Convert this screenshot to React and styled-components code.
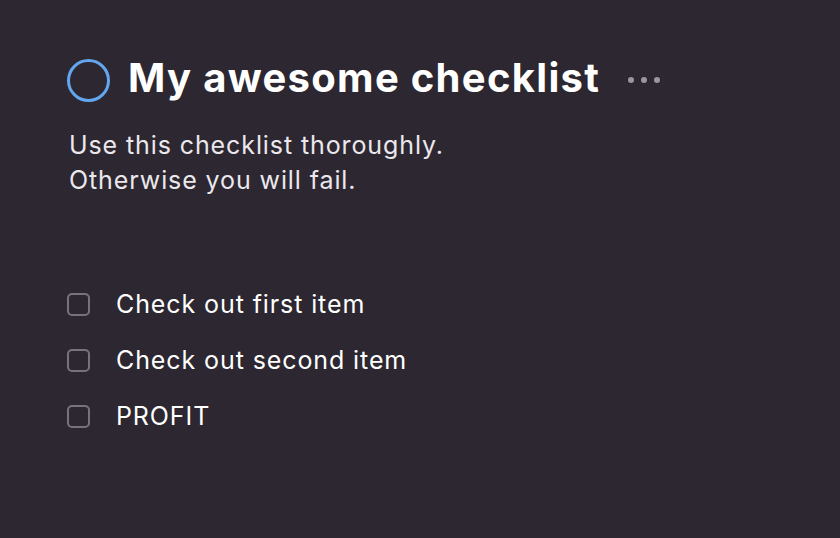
import React from "react";
import styled, { createGlobalStyle } from "styled-components";

const GlobalStyle = createGlobalStyle`
  html, body {
    margin: 0;
    padding: 0;
    background: #2c2730;
  }
  body {
    font-family: Inter, "Noto Sans", "Liberation Sans", sans-serif;
    -webkit-font-smoothing: antialiased;
  }
`;

const Page = styled.div`
  width: 840px;
  height: 538px;
  background: #2c2730;
  box-sizing: border-box;
  padding: 56px 0 0 67px;
  display: flex;
  flex-direction: column;
`;

const TitleRow = styled.div`
  display: flex;
  align-items: center;
  height: 48px;
`;

const Ring = styled.span`
  width: 43px;
  height: 43px;
  border-radius: 50%;
  border: 3.5px solid #64a5f0;
  box-sizing: border-box;
  flex: none;
  margin-right: 18px;
`;

const Title = styled.h1`
  margin: -6px 0 0 0;
  font-size: 40px;
  font-weight: 700;
  color: #ffffff;
  letter-spacing: 1.3px;
`;

const More = styled.button`
  background: none;
  border: 0;
  padding: 0;
  margin-left: 28px;
  display: flex;
  gap: 7px;
  cursor: pointer;
`;

const Dot = styled.span`
  width: 6px;
  height: 6px;
  border-radius: 50%;
  background: #9a96a0;
`;

const Notes = styled.p`
  margin: 24px 0 0 2px;
  font-size: 25px;
  line-height: 35px;
  letter-spacing: 0.9px;
  color: #ebe8ed;
`;

const List = styled.ul`
  list-style: none;
  margin: 88px 0 0 0;
  padding: 0;
  display: flex;
  flex-direction: column;
  gap: 20px;
`;

const Item = styled.li`
  display: flex;
  align-items: center;
  gap: 26px;
  height: 36px;
`;

const Box = styled.span`
  width: 23px;
  height: 23px;
  box-sizing: border-box;
  border: 2px solid #77727c;
  border-radius: 5px;
  flex: none;
`;

const Label = styled.span`
  font-size: 25px;
  letter-spacing: 0.9px;
  color: #ffffff;
`;

const items = ["Check out first item", "Check out second item", "PROFIT"];

export default function App() {
  return (
    <Page>
      <GlobalStyle />
      <TitleRow>
        <Ring />
        <Title>My awesome checklist</Title>
        <More aria-label="More">
          <Dot />
          <Dot />
          <Dot />
        </More>
      </TitleRow>
      <Notes>
        Use this checklist thoroughly.
        <br />
        Otherwise you will fail.
      </Notes>
      <List>
        {items.map((t) => (
          <Item key={t}>
            <Box />
            <Label>{t}</Label>
          </Item>
        ))}
      </List>
    </Page>
  );
}
